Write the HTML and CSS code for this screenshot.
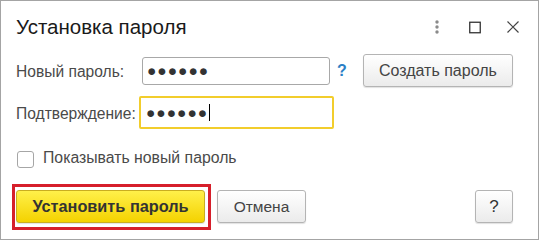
FILE: index.html
```html
<!DOCTYPE html>
<html lang="ru">
<head>
<meta charset="utf-8">
<title>Установка пароля</title>
<link rel="stylesheet" href="styles.css">
</head>
<body>
<div class="window">
  <div class="header">
    <h1 class="title">Установка пароля</h1>
    <div class="win-controls">
      <svg class="ctl ctl-more" width="4" height="14" viewBox="0 0 4 14"><circle cx="2" cy="2" r="1.7" fill="#8a8a8a"/><circle cx="2" cy="7" r="1.7" fill="#8a8a8a"/><circle cx="2" cy="12" r="1.7" fill="#8a8a8a"/></svg>
      <svg class="ctl ctl-max" width="12" height="14" viewBox="0 0 12 14"><rect x="0.75" y="2.25" width="10.5" height="10.5" fill="none" stroke="#333" stroke-width="1.3"/></svg>
      <svg class="ctl ctl-close" width="12" height="14" viewBox="0 0 12 14"><path d="M0.5 1.5 L11.5 12.5 M11.5 1.5 L0.5 12.5" stroke="#444" stroke-width="1.2" fill="none"/></svg>
    </div>
  </div>
  <div class="form">
    <div class="row row-new">
      <label class="label">Новый пароль:</label>
      <div class="input"><span class="mask">●●●●●●</span></div>
      <span class="hint">?</span>
      <button class="btn btn-gen">Создать пароль</button>
    </div>
    <div class="row row-confirm">
      <label class="label">Подтверждение:</label>
      <div class="input input-focus"><span class="mask">●●●●●●</span><span class="caret"></span></div>
    </div>
    <div class="row row-check">
      <span class="checkbox"></span>
      <span class="check-label">Показывать новый пароль</span>
    </div>
    <div class="actions">
      <span class="highlight"><button class="btn btn-primary">Установить пароль</button></span>
      <button class="btn btn-cancel">Отмена</button>
      <button class="btn btn-help">?</button>
    </div>
  </div>
</div>
</body>
</html>
```
FILE: styles.css
```css
html, body {
  margin: 0;
  padding: 0;
  background: #fff;
}
body {
  font-family: "Liberation Sans", Arial, sans-serif;
  color: #4a4a4a;
}
.window {
  width: 539px;
  height: 240px;
  box-sizing: border-box;
  border: 1px solid #a4a4a4;
  background: #fff;
  display: flex;
  flex-direction: column;
}
.header {
  height: 53px;
  box-sizing: border-box;
  padding: 14px 19px 0 15px;
  display: flex;
  align-items: flex-start;
}
.title {
  margin: 0;
  font-size: 20.5px;
  line-height: 24px;
  font-weight: normal;
  color: #1a1a1a;
}
.win-controls {
  margin-left: auto;
  margin-top: 5px;
  display: flex;
  align-items: center;
  height: 14px;
}
.ctl { display: block; }
.ctl-max { margin-left: 30px; }
.ctl-close { margin-left: 26px; }

.form {
  padding: 0 25px 0 15px;
  display: flex;
  flex-direction: column;
}
.row {
  display: flex;
  align-items: center;
}
.label {
  width: 126px;
  flex: none;
  font-size: 15.6px;
  line-height: 17px;
  padding-top: 2px;
  color: #4a4a4a;
  white-space: nowrap;
}
.row-new { height: 33px; }
.input {
  width: 189px;
  height: 28px;
  box-sizing: border-box;
  border: 1px solid #a8a8a8;
  border-radius: 3px;
  background: #fff;
  display: flex;
  align-items: center;
  padding-left: 4px;
}
.mask {
  font-family: "Liberation Sans", "DejaVu Sans", sans-serif;
  font-size: 15.5px;
  letter-spacing: 1px;
  color: #333;
  line-height: 17px;
}
.hint {
  margin-left: 7px;
  font-size: 16px;
  font-weight: bold;
  color: #2b80c5;
}
.btn {
  font-family: "Liberation Sans", Arial, sans-serif;
  font-size: 16px;
  color: #444;
  height: 33px;
  box-sizing: border-box;
  border: 1px solid #b4b4b4;
  border-radius: 3px;
  background: linear-gradient(#ffffff, #ebebeb);
  box-shadow: 0 1px 1px rgba(0,0,0,0.12);
  padding: 0;
  margin: 0;
}
.btn-gen {
  margin-left: 16px;
  width: 151px;
}
.row-confirm {
  margin-top: 9px;
  height: 33px;
}
.input-focus {
  width: 195px;
  height: 33px;
  margin-left: -3px;
  border: 2px solid #f2cd2c;
  border-radius: 2px;
  padding-left: 5px;
}
.caret {
  width: 1px;
  height: 17px;
  background: #000;
  margin-left: 1px;
}
.row-check {
  margin-top: 22px;
  height: 17px;
  align-items: flex-start;
}
.checkbox {
  width: 17px;
  height: 17px;
  box-sizing: border-box;
  margin-left: 1px;
  border: 1px solid #a6a6a6;
  border-radius: 3px;
  background: #fff;
}
.check-label {
  margin-left: 9px;
  margin-top: -2px;
  font-size: 15.8px;
  line-height: 17px;
  color: #4a4a4a;
}
.actions {
  margin-top: 22px;
  height: 33px;
  display: flex;
  align-items: center;
}
.highlight {
  display: flex;
  border: 3px solid #d61f2b;
  padding: 3px 3px 4px 1px;
  margin: -6px 0 -7px -4px;
}
.btn-primary {
  width: 189px;
  font-weight: bold;
  font-size: 16.3px;
  color: #333;
  border-color: #c9ad20;
  background: linear-gradient(#fff04a, #f4d200);
}
.btn-cancel {
  margin-left: 6px;
  width: 89px;
  font-size: 15.5px;
}
.btn-help {
  margin-left: auto;
  width: 38px;
  font-size: 17px;
  color: #333;
}
```
